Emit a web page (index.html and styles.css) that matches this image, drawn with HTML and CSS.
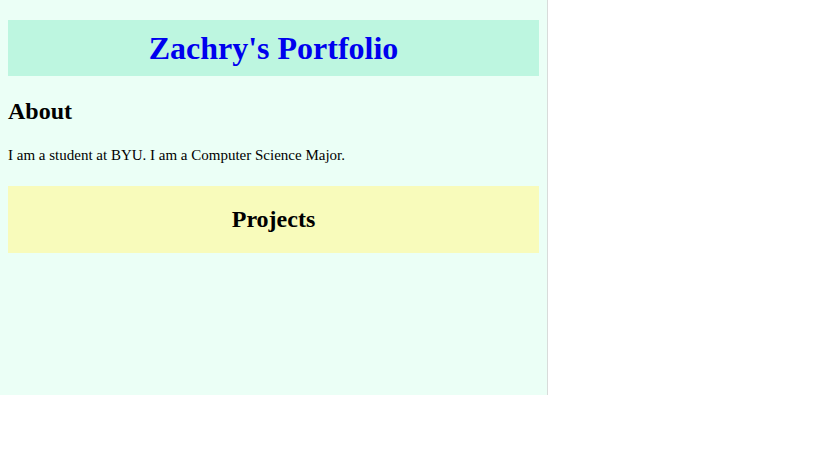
FILE: index.html
```html
<!DOCTYPE html>
<html>
<head>
<meta charset="utf-8">
<title>Zachry's Portfolio</title>
<link rel="stylesheet" href="styles.css">
</head>
<body>
<div class="page">
  <header class="banner">
    <h1 class="banner-title">Zachry's Portfolio</h1>
  </header>
  <section class="about">
    <h2 class="section-title">About</h2>
    <p class="about-text">I am a student at BYU. I am a Computer Science Major.</p>
  </section>
  <section class="projects">
    <h2 class="projects-title">Projects</h2>
  </section>
</div>
</body>
</html>
```
FILE: styles.css
```css
html, body {
  margin: 0;
  padding: 0;
  background: #ffffff;
}
body {
  font-family: "Liberation Serif", "Times New Roman", serif;
  color: #000000;
}
.page {
  width: 531px;
  height: 375px;
  padding: 20px 8px 0 8px;
  background: #ebfff6;
  border-right: 1px solid #d8dcda;
}
.banner {
  background: #bdf6e0;
  height: 56px;
  display: flex;
  align-items: center;
  justify-content: center;
}
.banner-title {
  margin: 0;
  font-size: 32px;
  font-weight: bold;
  color: #0000ee;
}
.about {
  display: flow-root;
}
.section-title {
  font-size: 24px;
  margin: 22px 0 22px 0;
}
.about-text {
  font-size: 15px;
  margin: 0;
}
.projects {
  margin-top: 22px;
  background: #f8fbbb;
  display: flow-root;
  text-align: center;
}
.projects-title {
  font-size: 24px;
  margin: 20px 0;
}
```
